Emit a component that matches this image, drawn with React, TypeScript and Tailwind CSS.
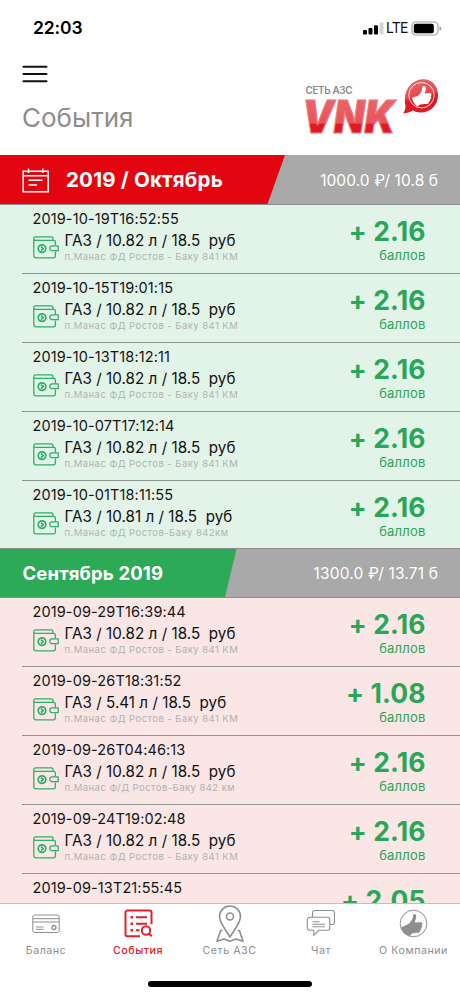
import React from "react";

type Entry = { date: string; title?: string; place?: string; points: string };

const october: Entry[] = [
  { date: "2019-10-19T16:52:55", title: "ГАЗ / 10.82 л / 18.5  руб", place: "п.Манас ФД Ростов - Баку 841 КМ", points: "+ 2.16" },
  { date: "2019-10-15T19:01:15", title: "ГАЗ / 10.82 л / 18.5  руб", place: "п.Манас ФД Ростов - Баку 841 КМ", points: "+ 2.16" },
  { date: "2019-10-13T18:12:11", title: "ГАЗ / 10.82 л / 18.5  руб", place: "п.Манас ФД Ростов - Баку 841 КМ", points: "+ 2.16" },
  { date: "2019-10-07T17:12:14", title: "ГАЗ / 10.82 л / 18.5  руб", place: "п.Манас ФД Ростов - Баку 841 КМ", points: "+ 2.16" },
  { date: "2019-10-01T18:11:55", title: "ГАЗ / 10.81 л / 18.5  руб", place: "п.Манас ФД Ростов-Баку 842км", points: "+ 2.16" },
];

const september: Entry[] = [
  { date: "2019-09-29T16:39:44", title: "ГАЗ / 10.82 л / 18.5  руб", place: "п.Манас ФД Ростов - Баку 841 КМ", points: "+ 2.16" },
  { date: "2019-09-26T18:31:52", title: "ГАЗ / 5.41 л / 18.5  руб", place: "п.Манас ФД Ростов - Баку 841 КМ", points: "+ 1.08" },
  { date: "2019-09-26T04:46:13", title: "ГАЗ / 10.82 л / 18.5  руб", place: "п.Манас Ф/Д Ростов-Баку 842 км", points: "+ 2.16" },
  { date: "2019-09-24T19:02:48", title: "ГАЗ / 10.82 л / 18.5  руб", place: "п.Манас ФД Ростов - Баку 841 КМ", points: "+ 2.16" },
  { date: "2019-09-13T21:55:45", points: "+ 2.05" },
];

function Wallet() {
  return (
    <svg width="26" height="23" viewBox="0 0 26 23" fill="none" stroke="#2fb067" strokeWidth="1.3" strokeLinejoin="round">
      <path d="M22.4 9.4V6.2a1.800 1.800 0 0 0-1.800-1.800H2.600A1.800 1.800 0 0 1 .8 2.800v17a2 2 0 0 0 2 2h17.800a1.800 1.800 0 0 0 1.800-1.800v-4.600" />
      <path d="M.8 2.600A1.800 1.800 0 0 1 2.600.8h15.600a1.800 1.800 0 0 1 1.800 1.800v1.800" />
      <path d="M25.200 9.900v4.800h-6a2.400 2.400 0 0 1 0-4.800z" />
      <circle cx="9" cy="12.600" r="3.800" strokeWidth="1.700" />
      <path d="M8 10.600l2.200 2L8 14.600" strokeWidth="1.700" />
    </svg>
  );
}

function Row({ entry, last }: { entry: Entry; last?: boolean }) {
  return (
    <div className={last ? "h-[67px] shrink-0 pl-[22px]" : "h-[69px] shrink-0 pl-[22px]"}>
      <div className={last ? "flex h-full justify-between" : "flex h-full justify-between border-b border-[#8f9692]"}>
        <div className="pl-[10.5px] pt-[4px]">
          <div className="h-[19px] whitespace-pre text-[14.5px] leading-[19px] tracking-[0.12px] text-[#151515]">{entry.date}</div>
          {entry.title && (
            <div className="flex">
              <div className="w-[32px] pt-[8px]"><Wallet /></div>
              <div>
                <div className="h-[20px] whitespace-pre pt-[3px] text-[15.2px] leading-[20px] tracking-[0.03px] text-[#111]">{entry.title}</div>
                <div className="mt-[2px] h-[13px] whitespace-pre text-[9.5px] leading-[13px] tracking-[0.45px] text-[#b0b3b1]">{entry.place}</div>
              </div>
            </div>
          )}
        </div>
        <div className="pr-[34.5px] pt-[9px] text-right text-[#29a758]">
          <div className="h-[33px] whitespace-pre text-[26.5px] font-bold leading-[34px] tracking-[0.1px]">{entry.points}</div>
          {entry.title && <div className="h-[16px] text-[13px] leading-[17px] tracking-[0.2px]">баллов</div>}
        </div>
      </div>
    </div>
  );
}

function Logo() {
  return (
    <svg width="140" height="60" viewBox="0 0 140 60" className="overflow-visible">
      <defs>
        <linearGradient id="word" x1="0" y1="0" x2="0" y2="1">
          <stop offset="0.2" stopColor="#e9646a" />
          <stop offset="0.63" stopColor="#e85359" />
          <stop offset="0.65" stopColor="#df1822" />
          <stop offset="0.9" stopColor="#e21a25" />
        </linearGradient>
        <linearGradient id="ball" x1="0" y1="0" x2="0.25" y2="1">
          <stop offset="0" stopColor="#ea6a70" />
          <stop offset="0.55" stopColor="#e4494f" />
          <stop offset="0.65" stopColor="#dc1a24" />
        </linearGradient>
      </defs>
      <text x="2.500" y="17.500" fontFamily="Inter, sans-serif" fontSize="9.800" fontWeight="600" fill="#8a8a8a" textLength="47">СЕТЬ АЗС</text>
      <text x="-1" y="56.500" fontFamily="Inter, sans-serif" fontStyle="italic" fontSize="45" fontWeight="900" fill="url(#word)" stroke="#e9787d" strokeWidth="1.200" textLength="93" lengthAdjust="spacingAndGlyphs">VNK</text>
      <g transform="translate(-3 -0.8)">
        <path d="M105.500 30.500c-2.800-13.500 4.500-25.500 17-26.500 9-.5 15.500 6.500 15.500 15.500 0 11-8 17.800-17 17.800-3.500 0-6-.8-8-2.200-2.800 2-6 3-10 3 1.800-2.200 2.500-4.500 2.500-7.600z" fill="url(#ball)" />
        <circle cx="121.500" cy="20" r="12.700" fill="none" stroke="#fff" strokeWidth="1" opacity=".85" />
        <path d="M112 22.500l6-2c3-2.500 4.300-5.500 4.200-8.300 1.300-2.300 3.700-1.200 3.600 1 0 2-.7 3.600-1.200 5l4.800-.4c2.600.2 2.500 2.500 1.300 3.200 1 1 .7 2.600-.6 3 .6 1.200 0 2.400-1.200 2.600.2 1.400-.8 2.200-2 2.200-4 .3-7-.3-9.300 2.500-2.600-1.500-5-4.800-5.600-8.800z" fill="#fff" />
      </g>
    </svg>
  );
}

function Tab({ label, width, active, children }: { label: string; width: string; active?: boolean; children: React.ReactNode }) {
  return (
    <div className={`${width} flex flex-col items-center ${active ? "text-[#df2227]" : "text-[#8f8f8f]"}`}>
      <div className="flex h-[39px] items-center justify-center">{children}</div>
      <div className={`whitespace-nowrap text-[10.7px] leading-[15px] tracking-[0.5px] ${active ? "font-medium" : ""}`}>{label}</div>
    </div>
  );
}

export default function App() {
  return (
    <div className="flex h-[996px] w-[460px] flex-col overflow-hidden bg-[#fefefe] font-['Inter','Liberation_Sans',sans-serif]">
      <header className="h-[155px] shrink-0">
        <div className="flex h-[56px] items-center justify-between pl-[33px] pr-[18px]">
          <div className="text-[17.5px] font-semibold tracking-[-0.1px] text-black">22:03</div>
          <div className="flex items-center">
            <svg width="21" height="13" viewBox="0 0 21 13">
              <rect x="0" y="8" width="4" height="4.500" rx="1" />
              <rect x="5.500" y="6" width="4" height="6.500" rx="1" />
              <rect x="11" y="3.200" width="4" height="9.300" rx="1" />
              <rect x="16.500" y="0.500" width="4" height="12" rx="1" fill="#d4d4d4" />
            </svg>
            <div className="ml-[2px] w-[22px] text-[14px] leading-[16px] tracking-[-0.800px] text-[#111]">LTE</div>
            <svg width="31" height="15" viewBox="0 0 31 15" className="ml-[3px]">
              <rect x="1" y="1" width="26" height="13" rx="3.800" fill="none" stroke="#a0a0a0" strokeWidth="1.200" />
              <rect x="2.800" y="2.800" width="20" height="9.400" rx="2" />
              <path d="M28.500 5.500v4c1.200-.4 1.900-1.100 1.900-2s-.7-1.600-1.900-2z" fill="#a0a0a0" />
            </svg>
          </div>
        </div>
        <div className="flex justify-between pl-[22px] pr-[17px]">
          <div>
            <svg width="26" height="18" viewBox="0 0 26 18" className="mt-[9px]" stroke="#111" strokeWidth="2" strokeLinecap="round">
              <path d="M1.500 1.800h23M1.500 9h23M1.500 16.200h23" />
            </svg>
            <div className="mt-[17px] text-[26px] leading-[36px] text-[#8e8e8e]">События</div>
          </div>
          <div className="mt-[20px]"><Logo /></div>
        </div>
      </header>

      <div className="relative flex h-[50px] shrink-0 items-center justify-between border-b border-[#8d8d8d] bg-[#a9a9a9] pr-[22px] text-white">
        <svg width="286" height="49" viewBox="0 0 286 49" className="absolute left-0 top-0"><path d="M0 0h285L267.500 49H0z" fill="#e30611" /></svg>
        <div className="relative flex items-center pl-[22px] pt-px">
          <svg width="28" height="25" viewBox="0 0 28 25" fill="none" stroke="#fff" strokeWidth="1.500">
            <path d="M1.200 3.200h25v20.500h-25zM1.200 7.700h25M6.500 .5v4.500M20.800 .5v4.500M6.500 12.300h14M6.500 17h8.500" />
          </svg>
          <div className="ml-[16px] pt-px text-[20.500px] font-bold tracking-[0.200px]">2019 / Октябрь</div>
        </div>
        <div className="pt-[3px] text-[15.500px] tracking-[0.080px]">1000.0 ₽/ 10.8 б</div>
      </div>
      <section className="flex h-[343px] shrink-0 flex-col bg-[#e2f3e8]">
        {october.map((e, i) => <Row key={e.date} entry={e} last={i === 4} />)}
      </section>
      <div className="relative flex h-[50px] shrink-0 items-center justify-between border-y border-[#8d8d8d] bg-[#a9a9a9] pr-[22px] text-white">
        <svg width="238" height="48" viewBox="0 0 238 48" className="absolute left-0 top-0"><path d="M0 0h236.500L225 48H0z" fill="#2caa57" /></svg>
        <div className="relative pl-[22.500px] pt-[2px] text-[18.500px] font-bold tracking-[0.150px]">Сентябрь 2019</div>
        <div className="pt-[2px] text-[15.500px] tracking-[0.150px]">1300.0 ₽/ 13.71 б</div>
      </div>
      <section className="flex h-[305px] shrink-0 flex-col overflow-hidden bg-[#f9e6e5]">
        {september.map((e) => <Row key={e.date} entry={e} />)}
      </section>

      <nav className="flex h-[93px] shrink-0 border-t border-[#c9bcbc] bg-[#fefefe]">
        <Tab label="Баланс" width="w-[92px]">
          <svg width="28" height="20" viewBox="0 0 28 20" fill="none" stroke="currentColor" strokeWidth="1">
            <rect x=".8" y="1" width="26.400" height="17.500" rx="2" />
            <path d="M.8 4.700h26.400M.8 8h26.400M4 13h7.500M4 15.300h7.500" />
            <circle cx="22" cy="13.500" r="2" strokeWidth="1.300" />
          </svg>
        </Tab>
        <Tab label="События" width="w-[92px]" active>
          <svg width="29" height="29" viewBox="0 0 29 29" fill="none" stroke="currentColor" strokeWidth="2">
            <path d="M16 27.300H3.500a2 2 0 0 1-2-2V3.500a2 2 0 0 1 2-2h22a2 2 0 0 1 2 2V15" />
            <path d="M12 8.300h11M12 14.800h11M12 21.300h3.500" />
            <path d="M6.500 8.300h2.500M6.500 14.800h2.500M6.500 21.300h2.500" strokeWidth="2.500" />
            <circle cx="22" cy="21.500" r="4.200" />
            <path d="M25 24.600l2.700 2.700" />
          </svg>
        </Tab>
        <Tab label="Сеть АЗС" width="w-[91px]">
          <svg width="28" height="38" viewBox="0 0 28 38" fill="none" stroke="currentColor" strokeWidth="1.600" strokeLinejoin="round">
            <path d="M14 32C10 25 3.500 18 3.500 11.500a10.500 10.500 0 0 1 21 0C24.500 18 18 25 14 32z" />
            <circle cx="14" cy="11.500" r="3.500" />
            <path d="M6.500 25.500H4.600L1 36.300l7-2.300 6 2.300 6-2.300 7 2.300-3.600-10.800h-1.900" />
          </svg>
        </Tab>
        <Tab label="Чат" width="w-[92px]">
          <svg width="30" height="29" viewBox="0 0 30 29" fill="none" stroke="currentColor" strokeWidth="1.100" strokeLinejoin="round">
            <path d="M6.500 8V4a2.500 2.500 0 0 1 2.500-2.500h17A2.500 2.500 0 0 1 28.500 4v9a2.500 2.500 0 0 1-2.500 2.500h-2" />
            <path d="M3.800 8.300h17.500a2.500 2.500 0 0 1 2.500 2.500v8a2.500 2.500 0 0 1-2.500 2.500h-8.500l-5 5v-5h-4a2.500 2.500 0 0 1-2.500-2.500v-8a2.500 2.500 0 0 1 2.500-2.500z" />
            <path d="M6.500 12.700h7M6.500 15.200h12.500M6.500 17.700h12.500" />
          </svg>
        </Tab>
        <Tab label="О Компании" width="w-[93px]">
          <svg width="29" height="29" viewBox="0 0 29 29">
            <circle cx="14.500" cy="14.500" r="13.300" fill="none" stroke="currentColor" strokeWidth="1" />
            <path d="M2 18.500l7-3.200c3-2.300 4.800-5 5.200-9 .4-2.200 3-1.500 3 .8 0 2.500-1 4.800-1.500 6.500l6-.3c2.200.1 2.200 2.500.9 3 1 .8.6 2.500-.6 2.800.6 1.200 0 2.400-1.200 2.600.2 1.300-.6 2.100-2 2.100-4 .2-6.500.1-7.800 3.200C6.500 26 3.200 23.500 2 18.500z" fill="currentColor" />
          </svg>
        </Tab>
      </nav>
      <div className="pointer-events-none fixed left-[148px] top-[981px] h-[6px] w-[164px] rounded-full bg-black" />
    </div>
  );
}
